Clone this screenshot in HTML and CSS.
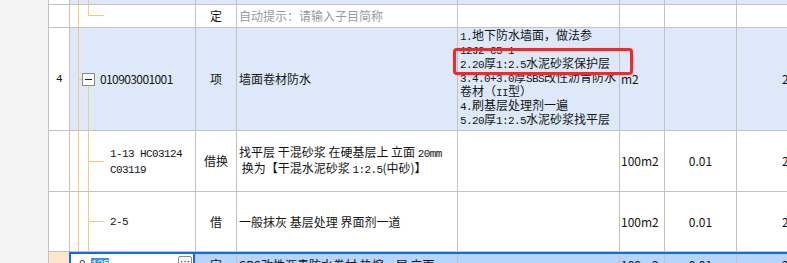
FILE: index.html
```html
<!DOCTYPE html>
<html lang="zh-CN">
<head>
<meta charset="utf-8">
<title>清单</title>
<link rel="stylesheet" href="styles.css">
</head>
<body>
<div class="screen">
  <div class="gutter"></div>
  <div class="grid">
    <!-- row 0 (partial) -->
    <div class="cell"></div>
    <div class="cell blue tree t-pass"></div>
    <div class="cell blue"></div>
    <div class="cell blue"></div>
    <div class="cell blue"></div>
    <div class="cell blue"></div>
    <div class="cell blue"></div>
    <div class="cell blue"></div>

    <!-- row 1 -->
    <div class="cell"></div>
    <div class="cell tree t-last"></div>
    <div class="cell c">定</div>
    <div class="cell pl2 hint">自动提示：请输入子目简称</div>
    <div class="cell"></div>
    <div class="cell"></div>
    <div class="cell"></div>
    <div class="cell"></div>

    <!-- row 2 -->
    <div class="cell c"><span class="m">4</span></div>
    <div class="cell blue tree t-parent code-cell"><span class="fold"></span><span class="code">010903001001</span></div>
    <div class="cell blue c">项</div>
    <div class="cell blue pl2">墙面卷材防水</div>
    <div class="cell blue desc">
      <div class="ln"><span class="m">1.</span>地下防水墙面，做法参</div>
      <div class="ln cut"><span class="m">12J2 C5 1</span></div>
      <div class="ln"><span class="m">2.20</span>厚<span class="m">1:2.5</span>水泥砂浆保护层</div>
      <div class="ln cut"><span class="m">3.4.0+3.0</span>厚<span class="m">SBS</span>改性沥青防水</div>
      <div class="ln">卷材（<span class="m">II</span>型）</div>
      <div class="ln"><span class="m">4.</span>刷基层处理剂一遍</div>
      <div class="ln"><span class="m">5.20</span>厚<span class="m">1:2.5</span>水泥砂浆找平层</div>
    </div>
    <div class="cell blue pl1">m2</div>
    <div class="cell blue"></div>
    <div class="cell blue last">2</div>

    <!-- row 3 -->
    <div class="cell"></div>
    <div class="cell tree t-child sub"><div><span class="m">1-13 HC03124</span><br><span class="m">C03119</span></div></div>
    <div class="cell c">借换</div>
    <div class="cell pl2"><div>找平层 干混砂浆 在硬基层上 立面 <span class="m">20mm</span><br>&nbsp;换为【干混水泥砂浆 <span class="m">1:2.5</span>(中砂)】</div></div>
    <div class="cell"></div>
    <div class="cell pl1">100m2</div>
    <div class="cell c">0.01</div>
    <div class="cell last">2</div>

    <!-- row 4 -->
    <div class="cell"></div>
    <div class="cell tree t-child sub"><span class="m">2-5</span></div>
    <div class="cell c">借</div>
    <div class="cell pl2">一般抹灰 基层处理 界面剂一道</div>
    <div class="cell"></div>
    <div class="cell pl1">100m2</div>
    <div class="cell c">0.01</div>
    <div class="cell last">2</div>

    <!-- row 5 (selected, editing) -->
    <div class="cell peach"></div>
    <div class="sel">
      <div class="cell edit"><span class="val m">9-<span class="hl">135</span></span><span class="more">…</span></div>
      <div class="cell selbg c">定</div>
      <div class="cell selbg pl2">SBS改性沥青防水卷材 热熔一层 立面</div>
      <div class="cell selbg"></div>
      <div class="cell selbg pl1">100m2</div>
      <div class="cell selbg c">0.01</div>
      <div class="cell selbg last">2</div>
    </div>
  </div>
  <div class="callout"></div>
</div>
</body>
</html>
```

FILE: styles.css
```css
html, body {
  margin: 0;
  padding: 0;
  background: #ffffff;
}

.screen {
  position: relative;
  display: flex;
  width: 787px;
  height: 263px;
  overflow: hidden;
}

.gutter {
  flex: 0 0 48px;
  background: #f3f3f3;
}

.grid {
  flex: none;
  display: grid;
  grid-template-columns: 20px 125px 40px 220px 161px 44px 71px 80px;
  grid-template-rows: 4px 22px 102px 60px 59px 24px;
  gap: 1px;
  padding-left: 1px;
  background: #c2c2c2;
  align-content: start;
}

.cell {
  background-color: #ffffff;
  font-family: "Noto Sans CJK SC", sans-serif;
  font-size: 12px;
  line-height: 14px;
  color: #141414;
  display: flex;
  align-items: center;
  overflow: hidden;
  white-space: nowrap;
  min-width: 0;
}

/* half-width mono runs (SimSun-like 6px advance) */
.m {
  font-family: "Liberation Mono", "DejaVu Sans Mono", monospace;
  font-size: 11px;
  letter-spacing: -0.6px;
  color: #141414;
}

.blue { background-color: #dde9fb; }
.c { justify-content: center; }
.pl1 { padding-left: 1px; }
.pl2 { padding-left: 2px; }
.last { padding-left: 45px; }
.hint { color: #9a9a9a; }

/* tree guide lines */
.tree {
  --o: #fbc77a;
  background-repeat: no-repeat;
}
.t-pass {
  background-image: linear-gradient(var(--o), var(--o)), linear-gradient(var(--o), var(--o));
  background-position: 8px 0, 18px 0;
  background-size: 1px 100%, 1px 100%;
}
.t-last {
  background-image: linear-gradient(var(--o), var(--o)), linear-gradient(var(--o), var(--o)), linear-gradient(var(--o), var(--o));
  background-position: 8px 0, 18px 0, 18px 10px;
  background-size: 1px 100%, 1px 11px, 16px 1px;
}
.t-parent {
  background-image: linear-gradient(var(--o), var(--o)), linear-gradient(var(--o), var(--o)), linear-gradient(var(--o), var(--o));
  background-position: 8px 0, 8px 50%, 18px 57px;
  background-size: 1px 100%, 4px 1px, 1px 100%;
}
.t-child {
  background-image: linear-gradient(var(--o), var(--o)), linear-gradient(var(--o), var(--o)), linear-gradient(var(--o), var(--o));
  background-position: 8px 0, 18px 0, 18px 50%;
  background-size: 1px 100%, 1px 100%, 16px 1px;
}

.code-cell {
  padding-left: 12px;
  gap: 5px;
}
.fold {
  position: relative;
  width: 11px;
  height: 11px;
  border: 1px solid #8a8a8a;
  background: #ffffff;
  flex: none;
}
.fold::after {
  content: "";
  position: absolute;
  left: 2px;
  right: 2px;
  top: 5px;
  height: 1px;
  background: #222222;
}
.code { letter-spacing: -0.6px; }

.sub { padding-left: 40px; }

.desc {
  flex-direction: column;
  align-items: flex-start;
  justify-content: flex-start;
  padding-left: 2px;
}
.ln {
  height: 14px;
  line-height: 14px;
}
.ln.cut {
  clip-path: inset(5px 0 0 0);
}

/* selected / editing row */
.peach { background-color: #fde6c9; }

.sel {
  grid-column: 2 / -1;
  margin-left: -1px;
  display: grid;
  grid-template-columns: 126px 40px 220px 161px 44px 71px 80px;
  column-gap: 1px;
  background: #c2c2c2;
  border-top: 2px solid #0b6cf2;
}
.selbg { background-color: #b5d5fa; }

.edit {
  border: 2px solid #0b6cf2;
  border-top: 0;
  padding-left: 8px;
  padding-right: 1px;
  justify-content: space-between;
}
.val { color: #333333; }
.hl {
  background: #3a8ff0;
  color: #ffffff;
}
.more {
  width: 12px;
  height: 14px;
  border: 1px solid #8d8d8d;
  border-radius: 2px;
  background: #f8f8f8;
  font-size: 10px;
  line-height: 10px;
  text-align: center;
  color: #333333;
}

/* red annotation box */
.callout {
  position: absolute;
  left: 453px;
  top: 48px;
  width: 174px;
  height: 21px;
  border: 3px solid #ff2424;
  border-radius: 4px;
  box-shadow: 0 0 1px rgba(255, 40, 40, 0.6);
}
```
